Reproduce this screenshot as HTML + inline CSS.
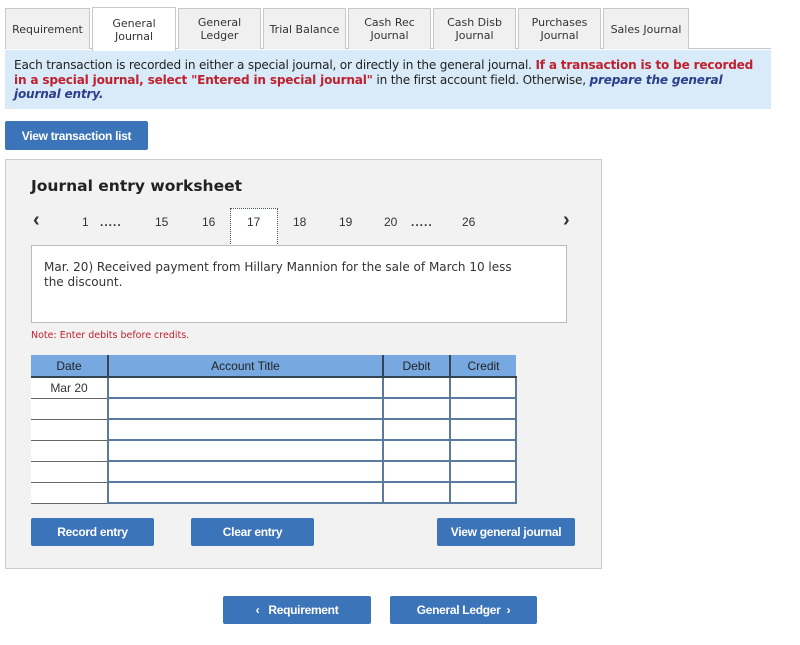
<!DOCTYPE html>
<html><head><style>
body{margin:0;width:800px;height:645px;background:#fff;font-family:"DejaVu Sans","Liberation Sans",sans-serif;position:relative;overflow:hidden}
.a{position:absolute}
.tab{position:absolute;top:8px;height:40px;background:#f0f0f0;border:1px solid #c8c8c8;border-bottom:none;font-size:11px;color:#333;display:flex;align-items:center;justify-content:center;text-align:center;line-height:13px}
.btn{position:absolute;background:#3c74b9;color:#fff;font-family:"Liberation Sans",sans-serif;font-weight:bold;font-size:12px;display:flex;align-items:center;justify-content:center;border-radius:2px;letter-spacing:-0.3px}
.pg{position:absolute;top:215px;font-size:12px;color:#333;font-family:"Liberation Sans",sans-serif}
table{border-collapse:collapse;font-family:"Liberation Sans",sans-serif;font-size:12px}
td{padding:0;height:19px}
</style></head><body>
<div class="a" style="left:5px;top:48px;width:766px;height:1px;background:#c8c8c8"></div>
<div class="tab" style="left:5px;width:83px">Requirement</div>
<div class="tab" style="left:92px;top:7px;width:82px;height:43px;background:#fff;z-index:2">General<br>Journal</div>
<div class="tab" style="left:178px;width:81px">General<br>Ledger</div>
<div class="tab" style="left:263px;width:81px">Trial Balance</div>
<div class="tab" style="left:348px;width:81px">Cash Rec<br>Journal</div>
<div class="tab" style="left:433px;width:81px">Cash Disb<br>Journal</div>
<div class="tab" style="left:518px;width:81px">Purchases<br>Journal</div>
<div class="tab" style="left:603px;width:84px">Sales Journal</div>
<div class="a" style="left:5px;top:50px;width:766px;height:59px;background:#d9ebf8"></div>
<div class="a" style="left:14px;top:58px;width:752px;font-size:12.1px;letter-spacing:-0.2px;line-height:14.5px;color:#222">Each transaction is recorded in either a special journal, or directly in the general journal. <b style="color:#c0212f">If a transaction is to be recorded in a special journal, select "Entered in special journal"</b> in the first account field. Otherwise, <b style="color:#2c3e8c;font-style:italic">prepare the general journal entry.</b></div>
<div class="btn" style="left:5px;top:121px;width:143px;height:29px">View transaction list</div>
<div class="a" style="left:5px;top:159px;width:595px;height:408px;background:#f2f2f2;border:1px solid #ccc"></div>
<div class="a" style="left:31px;top:177px;font-size:15.5px;font-weight:bold;color:#222">Journal entry worksheet</div>
<div class="pg" style="left:33px;top:209px;font-size:20px;font-weight:bold">&lsaquo;</div>
<div class="pg" style="left:82px">1</div>
<div class="pg" style="left:100px;font-weight:bold;letter-spacing:1px">.....</div>
<div class="pg" style="left:155px">15</div>
<div class="pg" style="left:202px">16</div>
<div class="a" style="left:230px;top:208px;width:46px;height:38px;background:#fff;border:1px dotted #456"></div>
<div class="pg" style="left:247px">17</div>
<div class="pg" style="left:293px">18</div>
<div class="pg" style="left:339px">19</div>
<div class="pg" style="left:384px">20</div>
<div class="pg" style="left:411px;font-weight:bold;letter-spacing:1px">.....</div>
<div class="pg" style="left:462px">26</div>
<div class="pg" style="left:563px;top:209px;font-size:20px;font-weight:bold">&rsaquo;</div>
<div class="a" style="left:31px;top:245px;width:534px;height:76px;background:#fff;border:1px solid #bbb"></div>
<div class="a" style="left:44px;top:260px;width:480px;font-size:12px;line-height:15px;color:#333">Mar. 20) Received payment from Hillary Mannion for the sale of March 10 less the discount.</div>
<div class="a" style="left:31px;top:330px;font-size:9.5px;color:#c0212f">Note: Enter debits before credits.</div>
<table class="a" style="left:31px;top:355px;width:486px">
<tr style="background:#77a9e0;color:#222;height:22px"><td style="width:76px;text-align:center;border-right:2px solid #345;border-bottom:2px solid #345">Date</td><td style="text-align:center;border-right:2px solid #345;border-bottom:2px solid #345">Account Title</td><td style="width:65px;text-align:center;border-right:2px solid #345;border-bottom:2px solid #345">Debit</td><td style="width:65px;text-align:center;border-bottom:2px solid #345">Credit</td></tr>
<tr style="background:#fff"><td style="text-align:center;color:#333;border-bottom:1px solid #666;border-right:2px solid #5a7aa0">Mar 20</td><td style="border:2px solid #5a7aa0"></td><td style="border:2px solid #5a7aa0"></td><td style="border:2px solid #5a7aa0"></td></tr>
<tr style="background:#fff"><td style="border-bottom:1px solid #666;border-right:2px solid #5a7aa0"></td><td style="border:2px solid #5a7aa0"></td><td style="border:2px solid #5a7aa0"></td><td style="border:2px solid #5a7aa0"></td></tr>
<tr style="background:#fff"><td style="border-bottom:1px solid #666;border-right:2px solid #5a7aa0"></td><td style="border:2px solid #5a7aa0"></td><td style="border:2px solid #5a7aa0"></td><td style="border:2px solid #5a7aa0"></td></tr>
<tr style="background:#fff"><td style="border-bottom:1px solid #666;border-right:2px solid #5a7aa0"></td><td style="border:2px solid #5a7aa0"></td><td style="border:2px solid #5a7aa0"></td><td style="border:2px solid #5a7aa0"></td></tr>
<tr style="background:#fff"><td style="border-bottom:1px solid #666;border-right:2px solid #5a7aa0"></td><td style="border:2px solid #5a7aa0"></td><td style="border:2px solid #5a7aa0"></td><td style="border:2px solid #5a7aa0"></td></tr>
<tr style="background:#fff"><td style="border-bottom:1px solid #666;border-right:2px solid #5a7aa0"></td><td style="border:2px solid #5a7aa0"></td><td style="border:2px solid #5a7aa0"></td><td style="border:2px solid #5a7aa0"></td></tr>
</table>
<div class="btn" style="left:31px;top:518px;width:123px;height:28px">Record entry</div>
<div class="btn" style="left:191px;top:518px;width:123px;height:28px">Clear entry</div>
<div class="btn" style="left:437px;top:518px;width:138px;height:28px">View general journal</div>
<div class="btn" style="left:223px;top:596px;width:148px;height:28px">&lsaquo;&nbsp;&nbsp; Requirement</div>
<div class="btn" style="left:390px;top:596px;width:147px;height:28px">General Ledger &nbsp;&rsaquo;</div>
</body></html>
